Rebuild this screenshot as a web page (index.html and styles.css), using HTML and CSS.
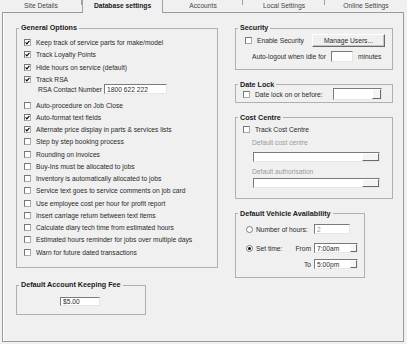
FILE: index.html
```html
<!DOCTYPE html>
<html lang="en">
<head>
    <meta charset="UTF-8">
    <title>Database settings</title>
    <link rel="stylesheet" href="styles.css">
</head>
<body>
    <div class="tabs">
        <div class="tab first">Site Details</div>
        <div class="tab active">Database settings</div>
        <div class="tab narrow">Accounts</div>
        <div class="tab">Local Settings</div>
        <div class="tab last">Online Settings</div>
    </div>

    <div class="panel">
        <div class="col-left">
            <fieldset class="group general">
                <legend>General Options</legend>
                <div class="general-body">
                    <div class="check"><span class="box"><svg width="5" height="5" viewBox="0 0 5 5"><path d="M0.6 2.3 L1.9 3.8 L4.4 0.9" fill="none" stroke="#000" stroke-width="1.1"/></svg></span>Keep track of service parts for make/model</div>
                    <div class="check"><span class="box"><svg width="5" height="5" viewBox="0 0 5 5"><path d="M0.6 2.3 L1.9 3.8 L4.4 0.9" fill="none" stroke="#000" stroke-width="1.1"/></svg></span>Track Loyalty Points</div>
                    <div class="check"><span class="box"><svg width="5" height="5" viewBox="0 0 5 5"><path d="M0.6 2.3 L1.9 3.8 L4.4 0.9" fill="none" stroke="#000" stroke-width="1.1"/></svg></span>Hide hours on service (default)</div>
                    <div class="check"><span class="box"><svg width="5" height="5" viewBox="0 0 5 5"><path d="M0.6 2.3 L1.9 3.8 L4.4 0.9" fill="none" stroke="#000" stroke-width="1.1"/></svg></span>Track RSA</div>
                    <div class="rsa">
                        <span class="rsa-label">RSA Contact Number</span>
                        <span class="field rsa-field">1800 622 222</span>
                    </div>
                    <div class="check"><span class="box"></span>Auto-procedure on Job Close</div>
                    <div class="check"><span class="box"><svg width="5" height="5" viewBox="0 0 5 5"><path d="M0.6 2.3 L1.9 3.8 L4.4 0.9" fill="none" stroke="#000" stroke-width="1.1"/></svg></span>Auto-format text fields</div>
                    <div class="check"><span class="box"><svg width="5" height="5" viewBox="0 0 5 5"><path d="M0.6 2.3 L1.9 3.8 L4.4 0.9" fill="none" stroke="#000" stroke-width="1.1"/></svg></span>Alternate price display in parts &amp; services lists</div>
                    <div class="check"><span class="box"></span>Step by step booking process</div>
                    <div class="check"><span class="box"></span>Rounding on invoices</div>
                    <div class="check"><span class="box"></span>Buy-Ins must be allocated to jobs</div>
                    <div class="check"><span class="box"></span>Inventory is automatically allocated to jobs</div>
                    <div class="check"><span class="box"></span>Service text goes to service comments on job card</div>
                    <div class="check"><span class="box"></span>Use employee cost per hour for profit report</div>
                    <div class="check"><span class="box"></span>Insert carriage return between text items</div>
                    <div class="check"><span class="box"></span>Calculate diary tech time from estimated hours</div>
                    <div class="check"><span class="box"></span>Estimated hours reminder for jobs over multiple days</div>
                    <div class="check"><span class="box"></span>Warn for future dated transactions</div>
                </div>
            </fieldset>

            <fieldset class="group fee">
                <legend>Default Account Keeping Fee</legend>
                <div class="fee-body">
                    <span class="field fee-field">$5.00</span>
                </div>
            </fieldset>
        </div>

        <div class="col-right">
            <fieldset class="group security">
                <legend>Security</legend>
                <div class="security-body">
                    <div class="sec-row">
                        <span class="check-inline"><span class="box"></span>Enable Security</span>
                        <span class="btn">Manage Users...</span>
                    </div>
                    <div class="idle-row">
                        <span>Auto-logout when idle for</span>
                        <span class="field idle-field"></span>
                        <span>minutes</span>
                    </div>
                </div>
            </fieldset>

            <fieldset class="group datelock">
                <legend>Date Lock</legend>
                <div class="datelock-body">
                    <span class="check-inline"><span class="box"></span>Date lock on or before:</span>
                    <span class="combo date-combo"><span class="combo-text"></span><span class="drop"></span></span>
                </div>
            </fieldset>

            <fieldset class="group cost">
                <legend>Cost Centre</legend>
                <div class="cost-body">
                    <div class="check"><span class="box"></span>Track Cost Centre</div>
                    <div class="muted cost-label">Default cost centre</div>
                    <span class="combo cost-combo"><span class="combo-text"></span><span class="drop"></span></span>
                    <div class="muted cost-label second">Default authorisation</div>
                    <span class="combo cost-combo tight"><span class="combo-text"></span><span class="drop"></span></span>
                </div>
            </fieldset>

            <fieldset class="group vehicle">
                <legend>Default Vehicle Availability</legend>
                <div class="vehicle-body">
                    <div class="veh-row">
                        <span class="radio"></span>
                        <span class="veh-label">Number of hours:</span>
                        <span class="field hours-field">2</span>
                    </div>
                    <div class="veh-row set">
                        <span class="radio on"></span>
                        <span class="veh-label split"><span>Set time:</span><span>From</span></span>
                        <span class="combo time-combo"><span class="combo-text">7:00am</span><span class="drop"></span></span>
                    </div>
                    <div class="veh-row to">
                        <span class="radio-gap"></span>
                        <span class="veh-label right">To</span>
                        <span class="combo time-combo"><span class="combo-text">5:00pm</span><span class="drop"></span></span>
                    </div>
                </div>
            </fieldset>
        </div>
    </div>
</body>
</html>
```

FILE: styles.css
```css
* {
    box-sizing: border-box;
    margin: 0;
    padding: 0;
}
body {
    width: 407px;
    height: 344px;
    overflow: hidden;
    background: #f0f0f0;
    font-family: "Liberation Sans", Arial, sans-serif;
    font-size: 6.7px;
    color: #2a2a2a;
}

/* tab strip */
.tabs {
    display: flex;
    align-items: flex-start;
    height: 12px;
}
.tab {
    width: 82px;
    height: 12px;
    line-height: 12px;
    text-align: center;
    color: #444;
    background: linear-gradient(#a0a0a0, #a0a0a0) right top / 1px 5px no-repeat;
}
.tab.narrow {
    width: 80px;
}
.tab.last {
    background: none;
}
.tab.active {
    position: relative;
    width: 81px;
    height: 13px;
    font-weight: bold;
    color: #1a1a1a;
    background: #f0f0f0;
    border-left: 1px solid #a0a0a0;
    border-right: 1px solid #a0a0a0;
}

/* main panel */
.panel {
    display: flex;
    gap: 17px;
    height: 330px;
    margin: 0 3px 0 2px;
    padding: 11px 0 0 13px;
    border: 1px solid #9a9a9a;
    box-shadow: inset 1px 0 0 #fff;
}
.col-left {
    width: 202px;
}
.col-right {
    width: 158px;
}

/* group boxes */
.group {
    border: 1px solid #b0b0b0;
    padding: 0;
    min-width: 0;
}
.group legend {
    margin-left: 2px;
    padding: 0 2px;
    font-size: 7.2px;
    line-height: 8px;
    font-weight: bold;
    color: #1a1a1a;
}

.check, .check-inline {
    display: flex;
    align-items: center;
    white-space: nowrap;
}
.check {
    height: 12.25px;
}
.box {
    flex: none;
    width: 7px;
    height: 7px;
    margin-right: 5px;
    border: 1px solid;
    border-color: #777 #aaa #aaa #777;
    background: #fff;
    display: flex;
    align-items: center;
    justify-content: center;
}
.box svg {
    display: block;
}

.field {
    display: flex;
    align-items: center;
    background: #fff;
    border: 1px solid;
    border-color: #7a7a7a #e6e6e6 #e6e6e6 #7a7a7a;
    padding-left: 2px;
    white-space: nowrap;
}
.combo {
    display: flex;
    background: #fff;
    border: 1px solid;
    border-color: #7a7a7a #e6e6e6 #e6e6e6 #7a7a7a;
}
.combo-text {
    flex: 1;
    display: flex;
    align-items: center;
    padding-left: 2px;
}
.drop {
    flex: none;
    background: #f4f4f4;
    border: 1px solid;
    border-color: #fff #6a6a6a #6a6a6a #fff;
}
.muted {
    color: #9a9a9a;
}

/* general options */
.general-body {
    padding: 4.4px 0 8.4px 7px;
}
.rsa {
    display: flex;
    align-items: center;
    height: 10px;
    margin: -1px 0 4.5px 14px;
}
.rsa-label {
    width: 66px;
    white-space: nowrap;
}
.rsa-field {
    width: 63px;
    height: 10px;
}

/* account keeping fee */
.fee {
    width: 130px;
    margin-top: 13.5px;
}
.fee-body {
    padding: 7.5px 0 8.5px 43px;
}
.fee-field {
    width: 40px;
    height: 9px;
}

/* security */
.security-body {
    padding: 2px 7px 7px 9px;
}
.sec-row {
    display: flex;
    align-items: center;
    height: 13px;
}
.btn {
    margin-left: auto;
    width: 73px;
    height: 13px;
    line-height: 11px;
    text-align: center;
    background: #f0f0f0;
    border: 1px solid;
    border-color: #fff #6a6a6a #6a6a6a #fff;
    box-shadow: inset -1px -1px 0 #c4c4c4;
}
.idle-row {
    display: flex;
    align-items: center;
    gap: 5px;
    height: 11px;
    margin-top: 4px;
    padding-left: 7px;
    white-space: nowrap;
}
.idle-field {
    width: 22px;
    height: 11px;
}

/* date lock */
.datelock {
    margin-top: 10.5px;
}
.datelock-body {
    display: flex;
    align-items: center;
    height: 12px;
    margin-top: -0.5px;
    padding: 0 10px 0 7px;
    box-sizing: content-box;
    padding-bottom: 2px;
}
.date-combo {
    margin-left: auto;
    width: 49px;
    height: 12px;
}
.date-combo .drop {
    width: 9px;
}

/* cost centre */
.cost {
    margin-top: 10.5px;
}
.cost-body {
    padding: 1.5px 0 10px 7px;
}
.cost-label {
    height: 10px;
    line-height: 10px;
    margin: 3px 0 0 9px;
}
.cost-label.second {
    margin-top: 5px;
}
.cost-combo {
    width: 127px;
    height: 10px;
    margin: 4px 0 0 10px;
}
.cost-combo.tight {
    margin-top: 1px;
}
.cost-combo .drop {
    width: 17px;
}

/* vehicle availability */
.vehicle {
    width: 130px;
    margin-top: 10.5px;
}
.vehicle-body {
    padding: 6.5px 0 8px 10px;
}
.veh-row {
    display: flex;
    align-items: center;
    height: 10px;
}
.veh-row.set {
    margin-top: 9px;
}
.veh-row.to {
    margin-top: 6px;
}
.radio, .radio-gap {
    flex: none;
    width: 7px;
    height: 7px;
    margin-right: 3px;
}
.radio {
    border-radius: 50%;
    border: 1px solid #7c7c7c;
    background: #fff;
    display: flex;
    align-items: center;
    justify-content: center;
}
.radio.on::after {
    content: "";
    width: 3px;
    height: 3px;
    border-radius: 50%;
    background: #111;
}
.veh-label {
    flex: none;
    width: 57px;
    margin-right: 1px;
    white-space: nowrap;
}
.veh-label.split {
    display: flex;
    justify-content: space-between;
    padding-right: 2px;
}
.veh-label.right {
    text-align: right;
    padding-right: 2px;
}
.hours-field {
    width: 36px;
    height: 10px;
    color: #9a9a9a;
}
.time-combo {
    width: 44px;
    height: 10px;
}
.time-combo .drop {
    width: 7px;
}
```
